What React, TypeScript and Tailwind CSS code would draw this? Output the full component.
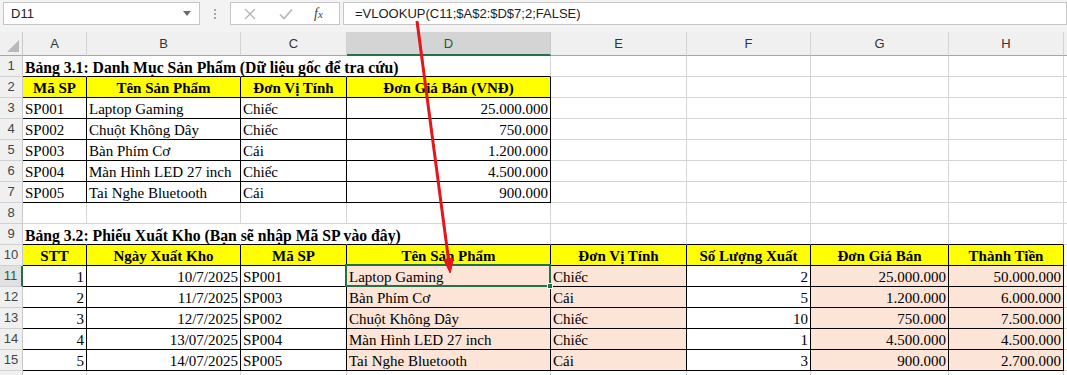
import React from "react";

type Cell = { t?: string; b?: boolean; a?: "l" | "r" | "c"; bg?: "y" | "p"; tb?: boolean; sel?: boolean; title?: boolean };

const COLS = ["A", "B", "C", "D", "E", "F", "G", "H"];

function buildRows(): Cell[][] {
  const rows: Cell[][] = [];
  const empty = (): Cell[] => COLS.map(() => ({}));
  // row 1
  const r1 = empty();
  r1[0] = { t: "Bảng 3.1: Danh Mục Sản Phẩm (Dữ liệu gốc để tra cứu)", b: true, title: true };
  rows.push(r1);
  // row 2
  const r2 = empty();
  ["Mã SP", "Tên Sản Phẩm", "Đơn Vị Tính", "Đơn Giá Bán (VNĐ)"].forEach((t, i) => {
    r2[i] = { t, b: true, a: "c", bg: "y", tb: true };
  });
  rows.push(r2);
  const t1 = [
    ["SP001", "Laptop Gaming", "Chiếc", "25.000.000"],
    ["SP002", "Chuột Không Dây", "Chiếc", "750.000"],
    ["SP003", "Bàn Phím Cơ", "Cái", "1.200.000"],
    ["SP004", "Màn Hình LED 27 inch", "Chiếc", "4.500.000"],
    ["SP005", "Tai Nghe Bluetooth", "Cái", "900.000"],
  ];
  t1.forEach((d) => {
    const r = empty();
    d.forEach((t, i) => {
      r[i] = { t, a: i === 3 ? "r" : "l", tb: true };
    });
    rows.push(r);
  });
  rows.push(empty()); // row 8
  const r9 = empty();
  r9[0] = { t: "Bảng 3.2: Phiếu Xuất Kho (Bạn sẽ nhập Mã SP vào đây)", b: true, title: true };
  rows.push(r9);
  const r10 = empty();
  ["STT", "Ngày Xuất Kho", "Mã SP", "Tên Sản Phẩm", "Đơn Vị Tính", "Số Lượng Xuất", "Đơn Giá Bán", "Thành Tiền"].forEach(
    (t, i) => {
      r10[i] = { t, b: true, a: "c", bg: "y", tb: true };
    }
  );
  rows.push(r10);
  const t2 = [
    ["1", "10/7/2025", "SP001", "Laptop Gaming", "Chiếc", "2", "25.000.000", "50.000.000"],
    ["2", "11/7/2025", "SP003", "Bàn Phím Cơ", "Cái", "5", "1.200.000", "6.000.000"],
    ["3", "12/7/2025", "SP002", "Chuột Không Dây", "Chiếc", "10", "750.000", "7.500.000"],
    ["4", "13/07/2025", "SP004", "Màn Hình LED 27 inch", "Chiếc", "1", "4.500.000", "4.500.000"],
    ["5", "14/07/2025", "SP005", "Tai Nghe Bluetooth", "Cái", "3", "900.000", "2.700.000"],
  ];
  t2.forEach((d, ri) => {
    const r = empty();
    d.forEach((t, i) => {
      const right = i === 0 || i === 1 || i === 5 || i === 6 || i === 7;
      const peach = i === 3 || i === 4 || i === 6 || i === 7;
      r[i] = { t, a: right ? "r" : "l", bg: peach ? "p" : undefined, tb: true, sel: ri === 0 && i === 3 };
    });
    rows.push(r);
  });
  rows.push(empty()); // row 16
  return rows;
}

const ROWS = buildRows();

function NameBox() {
  return (
    <div className="ml-[3px] flex h-[23px] w-[197px] items-center justify-between border border-[#c6c6c6] bg-white pl-[7px] pr-[8px]">
      <span className="text-[13px] text-[#222]">D11</span>
      <svg width="8" height="5" viewBox="0 0 8 5">
        <path d="M0 0 L8 0 L4 5 Z" fill="#6b6b6b" />
      </svg>
    </div>
  );
}

function Toolbar() {
  return (
    <div className="flex h-[32px] w-full items-start bg-[#f3f3f3] pt-[2px] font-['Liberation_Sans',sans-serif]">
      <NameBox />
      <div className="flex h-[23px] w-[30px] flex-col items-center justify-center gap-[2px]">
        <span className="h-[2px] w-[2px] bg-[#a8a8a8]" />
        <span className="h-[2px] w-[2px] bg-[#a8a8a8]" />
        <span className="h-[2px] w-[2px] bg-[#a8a8a8]" />
      </div>
      <div className="flex h-[23px] w-[110px] items-center border border-[#c6c6c6] bg-white">
        <svg className="ml-[13px]" width="12" height="12" viewBox="0 0 12 12">
          <path d="M1 1 L11 11 M11 1 L1 11" stroke="#b4b4b4" strokeWidth="1.3" fill="none" />
        </svg>
        <svg className="ml-[23px]" width="14" height="12" viewBox="0 0 14 12">
          <path d="M1 6.5 L5 10.5 L13 1.5" stroke="#b4b4b4" strokeWidth="1.6" fill="none" />
        </svg>
        <span className="ml-[21px] font-['Liberation_Serif',serif] text-[14px] italic text-[#444]">
          f<span className="text-[11px]">x</span>
        </span>
      </div>
      <div className="ml-[3px] flex h-[23px] flex-1 items-center border border-[#c6c6c6] bg-white pl-[11px]">
        <span className="text-[13px] text-[#222]">=VLOOKUP(C11;$A$2:$D$7;2;FALSE)</span>
      </div>
    </div>
  );
}

const GRID = "grid grid-cols-[23px_64px_154px_106px_204px_136px_124px_138px_115px_1fr]";

function HeaderRow() {
  return (
    <div className={`${GRID} h-[24px] bg-[#f0f0f0] font-['Liberation_Sans',sans-serif] text-[13px] text-[#333]`}>
      <div className="relative border-r border-b border-r-[#c8c8c8] border-b-[#a6a6a6]">
        <svg className="absolute right-[3px] bottom-[3px]" width="12" height="12" viewBox="0 0 12 12">
          <path d="M12 0 L12 12 L0 12 Z" fill="#b9b9b9" />
        </svg>
      </div>
      {COLS.map((c) =>
        c === "D" ? (
          <div
            key={c}
            className="flex items-center justify-center border-r border-b-2 border-r-[#c8c8c8] border-b-[#217346] bg-[#d4d4d4] pt-[1px] text-[#1d5e36]"
          >
            {c}
          </div>
        ) : (
          <div key={c} className="flex items-center justify-center border-r border-b border-r-[#d4d4d4] border-b-[#a6a6a6]">
            {c}
          </div>
        )
      )}
      <div className="border-b border-b-[#a6a6a6]" />
    </div>
  );
}

function inTable(r: number, c: number) {
  if (r < 0 || r >= ROWS.length || c < 0 || c >= COLS.length) return false;
  return !!ROWS[r][c].tb;
}

function Row({ ri }: { ri: number }) {
  const row = ROWS[ri];
  const num = ri + 1;
  const selRow = num === 11;
  const isTitle = num === 1 || num === 9;
  const label = num <= 15 ? String(num) : "";
  return (
    <div className={`${GRID} h-[21px]`}>
      {selRow ? (
        <div className="flex items-center justify-center border-r-2 border-b border-r-[#217346] border-b-[#d0d0d0] bg-[#e1e1e1] font-['Liberation_Sans',sans-serif] text-[13px] text-[#1d5e36]">
          {label}
        </div>
      ) : (
        <div className="flex items-center justify-center border-r border-b border-r-[#c8c8c8] border-b-[#d0d0d0] bg-[#f0f0f0] font-['Liberation_Sans',sans-serif] text-[13px] text-[#444]">
          {label}
        </div>
      )}
      {row.map((cell, ci) => {
        const blackR = cell.tb || inTable(ri, ci + 1);
        const blackB = cell.tb || inTable(ri + 1, ci);
        const hideR = isTitle && ci < 3;
        const rCls = hideR ? "border-r-transparent" : blackR ? "border-r-black" : "border-r-[#d4d4d4]";
        const bCls = blackB ? "border-b-black" : "border-b-[#d4d4d4]";
        const bgCls = cell.bg === "y" ? "bg-[#ffff00]" : cell.bg === "p" ? "bg-[#fce4d6]" : "";
        const aCls =
          cell.a === "r" ? "justify-end pr-[2px]" : cell.a === "c" ? "justify-center" : "justify-start pl-[2px]";
        const sizeCls = cell.title ? "text-[15.7px]" : "text-[15px]";
        return (
          <div
            key={ci}
            className={`relative flex items-end border-r border-b ${rCls} ${bCls} ${bgCls} ${aCls} whitespace-nowrap font-['Liberation_Serif',serif] ${sizeCls} leading-[17px] text-black ${
              cell.b ? "font-bold" : ""
            }`}
          >
            {cell.t && <span className="relative z-[1]">{cell.t}</span>}
            {cell.sel && (
              <div className="pointer-events-none absolute -top-[2px] -left-[2px] -right-[1px] -bottom-[1px] z-10 border-2 border-[#217346]">
                <div className="absolute -right-[4px] -bottom-[4px] h-[6px] w-[6px] border border-white bg-[#217346]" />
              </div>
            )}
          </div>
        );
      })}
      <div className="border-b border-b-[#d4d4d4]" />
    </div>
  );
}

function Arrow() {
  return (
    <svg className="pointer-events-none absolute left-0 top-0 z-20" width="1067" height="375" viewBox="0 0 1067 375">
      <line x1="417" y1="21" x2="448.6" y2="260" stroke="#e3161b" strokeWidth="3" />
      <path d="M450.2 273 L443.6 259.5 L453.5 258.2 Z" fill="#e3161b" stroke="#e3161b" strokeWidth="1" />
    </svg>
  );
}

export default function App() {
  return (
    <div className="relative h-[375px] w-[1067px] overflow-hidden bg-white">
      <Toolbar />
      <HeaderRow />
      {ROWS.map((_, i) => (
        <Row key={i} ri={i} />
      ))}
      <Arrow />
    </div>
  );
}
